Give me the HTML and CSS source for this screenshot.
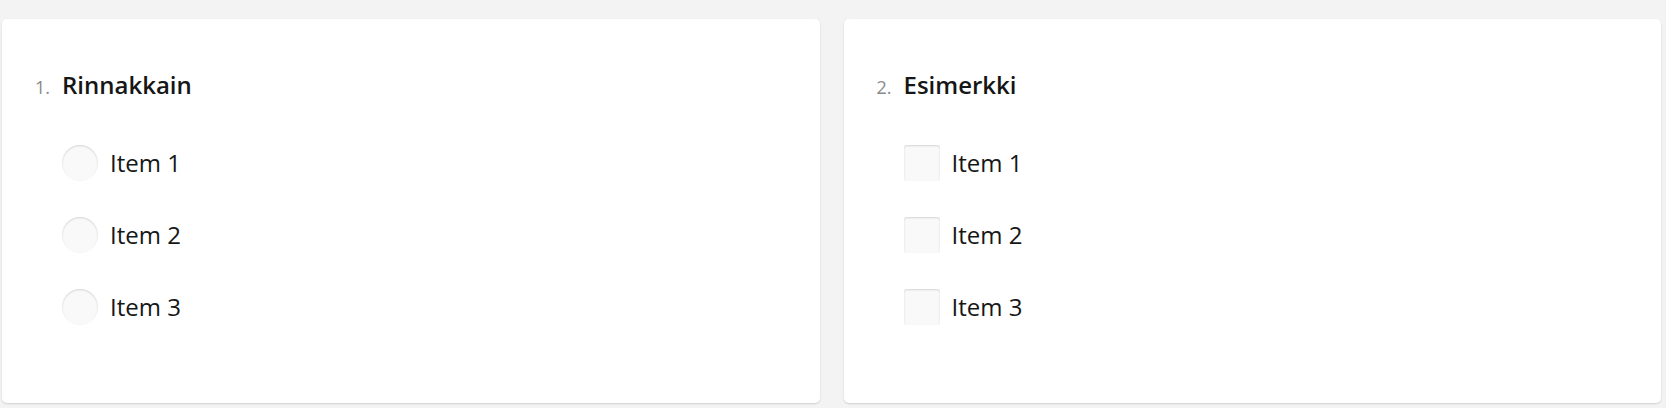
FILE: index.html
```html
<!DOCTYPE html>
<html lang="fi">
<head>
    <meta charset="UTF-8">
    <title>Kysely</title>
    <link rel="stylesheet" href="styles.css">
</head>
<body>
    <div class="page">
        <div class="card">
            <h3 class="q_title"><span class="q_num">1.</span><span>Rinnakkain</span></h3>
            <div class="items">
                <label class="item"><span class="deco radio"></span><span class="item_text">Item 1</span></label>
                <label class="item"><span class="deco radio"></span><span class="item_text">Item 2</span></label>
                <label class="item"><span class="deco radio"></span><span class="item_text">Item 3</span></label>
            </div>
        </div>
        <div class="card">
            <h3 class="q_title"><span class="q_num">2.</span><span>Esimerkki</span></h3>
            <div class="items">
                <label class="item"><span class="deco check"></span><span class="item_text">Item 1</span></label>
                <label class="item"><span class="deco check"></span><span class="item_text">Item 2</span></label>
                <label class="item"><span class="deco check"></span><span class="item_text">Item 3</span></label>
            </div>
        </div>
    </div>
</body>
</html>
```

FILE: styles.css
```css
body{
    margin: 0;
    background: #f3f3f3;
    font-family: "Open Sans", "Noto Sans", sans-serif;
    color: #161616;
}
.page{
    display: flex;
    gap: 24px;
    padding: 19px 5px 5px 2px;
}
.card{
    flex: 1;
    background: #fff;
    border-radius: 5px;
    box-shadow: 0 1px 2px rgba(0, 0, 0, 0.15);
    padding: 48px 0 60px 0;
}
.q_title{
    display: flex;
    align-items: baseline;
    margin: 0;
    padding-left: 33px;
    font-size: 24px;
    line-height: 36px;
    font-weight: 600;
}
.q_num{
    width: 27px;
    font-size: 18px;
    font-weight: 400;
    color: #8a8a8a;
}
.items{
    margin-top: 22px;
    padding-left: 60px;
}
.item{
    display: flex;
    align-items: center;
    gap: 12px;
    height: 72px;
}
.deco{
    width: 36px;
    height: 36px;
    background: #f9f9f9;
    box-shadow: inset 0 1px 2px rgba(0, 0, 0, 0.15);
}
.radio{
    border-radius: 50%;
}
.check{
    border-radius: 3px;
}
.item_text{
    font-size: 24px;
    line-height: 36px;
}
```
